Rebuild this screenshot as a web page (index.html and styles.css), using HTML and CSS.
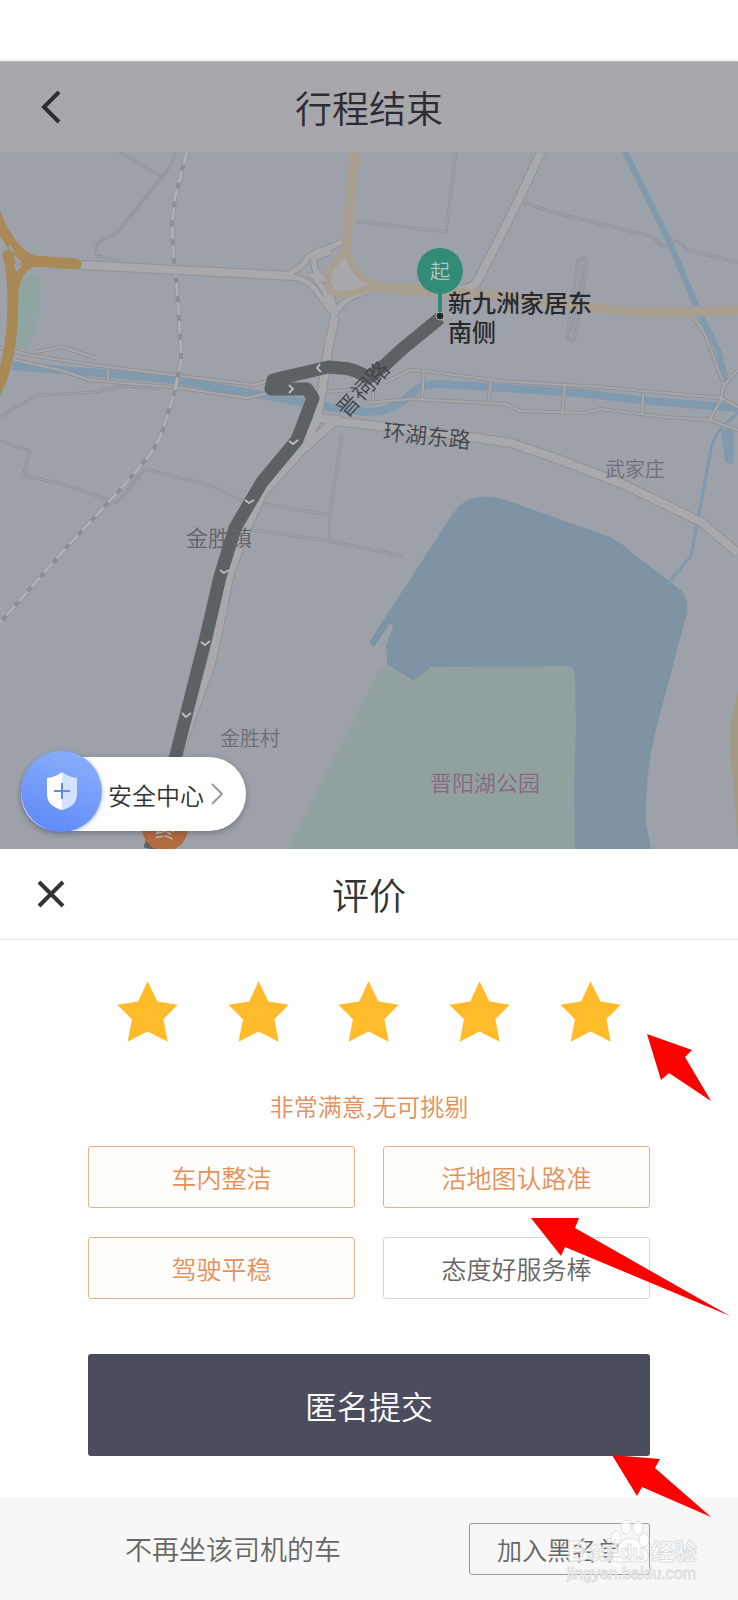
FILE: index.html
```html
<!DOCTYPE html>
<html lang="zh-CN">
<head>
<meta charset="utf-8">
<meta name="viewport" content="width=device-width, initial-scale=1">
<title>行程结束</title>
<link rel="stylesheet" href="styles.css">
</head>
<body>
<div class="page">
  <header class="topbar">
    <button class="icon-button" type="button" aria-label="返回">
      <svg class="icon-back" viewBox="0 0 22 34" aria-hidden="true"><path d="M19 2 4 17 19 32"/></svg>
    </button>
    <h1 class="title">行程结束</h1>
  </header>

  <section class="map" aria-label="行程地图">
    <svg class="map-canvas" viewBox="0 152 738 697" preserveAspectRatio="xMidYMid slice">
      <defs>
        <g id="lanes">
          <path d="M118 152 162 176M175 152Q172 166 163 176L120 229Q116 235 104 239 96 243 96 250L97 256 121 261"/>
          <path d="M456 152 446 232 356 221"/>
          <path d="M523 202 548 211 650 236Q655 238 662 246 668 246 672 241 680 240 687 250L738 262"/>
          <path d="M578 261Q585 254 587 262L575 338Q570 344 567 336ZM583 264 571 334"/>
          <path d="M0 417 35 396 95 392 125 386 160 389"/>
          <path d="M0 441 30 451 23 476 60 483 117 503 145 469 210 485 240 500 330 515 329 541M245 529 329 541 402 556M342 434 330 515"/>
        </g>
        <g id="banks">
          <path d="M0 348 35 356 100 366 180 376 255 385 276 378M15 360 60 370 90 380 180 388 247 398 268 393M35 352 62 347 96 358M108 370V380"/>
          <path d="M384 383 410 370 425 371 500 381 600 387 721 398 738 407M366 403 410 399 505 404 520 411 585 413 600 409 665 417 710 420 738 430"/>
          <path d="M424 371 422 399M491 382 488 403M565 385 562 412M643 393 642 414M722 398 709 421M373 388V403M693 318Q705 330 709 345L724 385 721 398M724 385 738 370M325 392 350 390"/>
        </g>
        <g id="roads">
          <path d="M81 265 177 270 294 276"/>
          <path d="M335 316 328 350 322 390 317 420 300 452 263 493 247 527 230 573 217 637 210 667 193 713 178 757"/>
          <path d="M541 152 520 197 495 247 478 280Q473 288 465 289L440 290"/>
          <path d="M296 455 335 421 370 425 478 438 511 443 555 458 625 485 701 522 738 553M315 418 340 420"/>
        </g>
        <g id="ramps">
          <path d="M290 273Q302 268 307 259 314 251 326 249L342 242"/>
          <path d="M326 280Q312 272 314 258L330 252"/>
          <path d="M292 277Q306 279 314 288L335 316M312 274 324 290 334 312M330 294 336 312Q346 296 368 291M310 275 330 281"/>
        </g>
      </defs>

      <rect class="land" x="0" y="152" width="738" height="697"/>
      <path class="green" d="M18 290Q34 266 41 280L38 320 28 347 12 350Z"/>
      <path class="water" d="M468 500Q477 496 488 497 498 497 511 502L610 537Q622 543 635 555L678 588Q686 594 687 603 688 612 684 624L655 733Q645 775 646 823L651 849H560V680H412L387 664 386 645 393 627Q392 622 389 625L374 647 369 642 450 518Q458 505 468 500Z"/>
      <path class="park" d="M387 664 412 682 431 667 570 666Q575 668 575 677L576 727 574 787 575 849H288L370 688Q376 674 387 664Z"/>
      <path class="amber-pale" d="M738 690 731 722Q729 745 732 770L738 843Z"/>

      <path class="river" d="M12 366 100 373 175 380 250 393 330 407 366 412Q388 412 402 402L418 388Q424 385 440 384L490 387 580 393 650 401 738 408"/>
      <path class="stream" d="M625 152 669 241 698 310 718 350 727 385"/>
      <path class="creek" d="M738 413 722 427Q713 438 711 450L698 518 691 556 669 582"/>
      <path class="pond" d="M721 430 734 426 733 465 725 462Z"/>

      <use href="#lanes" class="lane-edge"/>
      <use href="#lanes" class="lane-fill"/>
      <use href="#banks" class="bank-edge"/>
      <use href="#banks" class="bank-fill"/>
      <path class="rail-edge" d="M187 152 175 197 172 223 173 250 177 290 181 350V362L175 390 163 430Q156 448 143 463L117 493 67 547 20 600 0 623"/>
      <path class="rail-fill" d="M187 152 175 197 172 223 173 250 177 290 181 350V362L175 390 163 430Q156 448 143 463L117 493 67 547 20 600 0 623"/>
      <use href="#ramps" class="ramp-edge"/>
      <use href="#roads" class="road-edge"/>
      <use href="#ramps" class="ramp-fill"/>
      <use href="#roads" class="road-fill"/>
      <path class="junction" d="M347 252 363 276 374 286 343 296 329 290 328 272Z"/>
      <path class="tan-road" d="M355 152 348 220 347 248M598 308Q640 315 738 310M370 286 401 289 500 296 598 308"/>
      <path class="tan-ramp" d="M347 246Q344 255 336 262 327 270 328 282 330 297 348 294L376 286M347 246Q349 266 362 277L378 286"/>
      <path class="amber" d="M-4 215Q12 255 35 261L76 264M8 255Q15 280 12 325 9 368-5 393M32 262Q17 267 13 290"/>
      <path class="amber-gap" d="M9 244 16 252 10 251ZM14 264 23 265 16 272Z"/>

      <path class="route" d="M440 318 401 350 385 365 368 378Q355 368 340 368L328 367 273 380 271 389 307 389 313 398 297 440 262 482 235 528 220 577 207 633 176 755 150 849"/>
      <path class="route-arrows" d="M320 364 317 368 321 372M289 385 293 389 289 393M289 441 293 444 298 440M245 500 249 503 254 500M220 570 224 573 229 570M201 642 205 645 210 641M182 713 186 717 191 713"/>

      <circle class="start-pin" cx="440" cy="271" r="23"/>
      <path class="start-stem" d="M440 292V313"/>
      <circle class="start-dot" cx="440" cy="316" r="4"/>
      <text class="pin-text" x="440" y="279">起</text>
      <circle class="end-pin" cx="165" cy="828" r="23"/>
      <text class="pin-text" x="165" y="838">终</text>

      <text class="label road-name" transform="translate(363 389) rotate(-48)" y="8">晋祠路</text>
      <text class="label road-name" transform="translate(427 436) rotate(6)" y="8">环湖东路</text>
      <text class="label village" x="635" y="477">武家庄</text>
      <text class="label town" x="219" y="546">金胜镇</text>
      <text class="label village" x="250" y="746">金胜村</text>
      <text class="label park-name" x="485" y="791">晋阳湖公园</text>
      <text class="label place" x="448" y="312">新九洲家居东</text>
      <text class="label place" x="448" y="341">南侧</text>
    </svg>

    <button class="safety" type="button">
      <span class="safety-badge">
        <svg class="icon-shield" viewBox="0 0 32 38" aria-hidden="true">
          <path class="shield-left" d="M16 0Q10 5 1 6V22Q1 34 16 38Z"/>
          <path class="shield-right" d="M16 0Q22 5 31 6V22Q31 34 16 38Z"/>
          <path class="shield-plus" d="M16 11V27M8 19H24"/>
        </svg>
      </span>
      <span>安全中心</span>
      <svg class="icon-next" viewBox="0 0 14 24" aria-hidden="true"><path d="M2 2 12 12 2 22"/></svg>
    </button>
  </section>

  <main class="sheet">
    <div class="sheet-head">
      <button class="icon-button" type="button" aria-label="关闭">
        <svg class="icon-close" viewBox="0 0 28 28" aria-hidden="true"><path d="M2 2 26 26M26 2 2 26"/></svg>
      </button>
      <h2 class="title">评价</h2>
    </div>

    <form class="review">
      <div class="stars" role="radiogroup" aria-label="评分">
        <label class="star"><input type="radio" name="score" value="1" aria-label="1星"><svg viewBox="0 0 184 184" aria-hidden="true"><path d="M92 1 122 62 183 72 140 115 153 183 92 152 32 183 45 115 1 72 64 62Z"/></svg></label>
        <label class="star"><input type="radio" name="score" value="2" aria-label="2星"><svg viewBox="0 0 184 184" aria-hidden="true"><path d="M92 1 122 62 183 72 140 115 153 183 92 152 32 183 45 115 1 72 64 62Z"/></svg></label>
        <label class="star"><input type="radio" name="score" value="3" aria-label="3星"><svg viewBox="0 0 184 184" aria-hidden="true"><path d="M92 1 122 62 183 72 140 115 153 183 92 152 32 183 45 115 1 72 64 62Z"/></svg></label>
        <label class="star"><input type="radio" name="score" value="4" aria-label="4星"><svg viewBox="0 0 184 184" aria-hidden="true"><path d="M92 1 122 62 183 72 140 115 153 183 92 152 32 183 45 115 1 72 64 62Z"/></svg></label>
        <label class="star"><input type="radio" name="score" value="5" aria-label="5星" checked><svg viewBox="0 0 184 184" aria-hidden="true"><path d="M92 1 122 62 183 72 140 115 153 183 92 152 32 183 45 115 1 72 64 62Z"/></svg></label>
      </div>
      <p class="verdict">非常满意,无可挑剔</p>
      <div class="tags">
        <label class="tag"><input type="checkbox" name="tag" checked><span>车内整洁</span></label>
        <label class="tag"><input type="checkbox" name="tag" checked><span>活地图认路准</span></label>
        <label class="tag"><input type="checkbox" name="tag" checked><span>驾驶平稳</span></label>
        <label class="tag"><input type="checkbox" name="tag"><span>态度好服务棒</span></label>
      </div>
      <button class="submit" type="button">匿名提交</button>
    </form>

    <footer class="block-bar">
      <span>不再坐该司机的车</span>
      <button class="block-button" type="button">加入黑名单</button>
    </footer>

    <svg class="overlay" viewBox="0 849 738 751" aria-hidden="true">
      <g class="pointer">
        <path d="M647 1034 692 1050 685 1057 711 1101 669 1073 661 1080Z"/>
        <path d="M531 1218H579L575 1228 730 1316 565 1247 561 1256Z"/>
        <path d="M612 1455 660 1459 655 1468 711 1517 642 1487 637 1496Z"/>
      </g>
      <g class="watermark">
        <text class="mark-name" x="567" y="1561">Bai</text>
        <path d="M630 1538Q637 1538 642 1545L648 1553Q650 1563 640 1562 630 1560 620 1562 610 1562 613 1552L619 1545Q624 1538 630 1538Z"/>
        <ellipse cx="616" cy="1538" rx="5" ry="7"/>
        <ellipse cx="626" cy="1527" rx="5" ry="7"/>
        <ellipse cx="638" cy="1528" rx="5" ry="7"/>
        <ellipse cx="644" cy="1540" rx="5" ry="7"/>
        <text class="mark-du" x="620" y="1559">du</text>
        <text class="mark-cn" x="651" y="1560">经验</text>
        <text class="mark-url" x="567" y="1579">jingyan.baidu.com</text>
      </g>
    </svg>
  </main>
</div>
</body>
</html>
```

FILE: styles.css
```css
* {
  box-sizing: border-box;
}

body {
  margin: 0;
  background: #fff;
  color: #38383c;
  font-family: "Noto Sans CJK SC", sans-serif;
  font-size: 25px;
  font-weight: 350;
}

button {
  border: 0;
  padding: 0;
  background: none;
  color: inherit;
  font: inherit;
}

.page {
  padding-top: 61px;
}

.topbar,
.sheet-head {
  display: grid;
  grid-template-columns: 102px 1fr 102px;
  align-items: center;
  min-height: 91px;
}

.topbar {
  position: relative;
  border-top: 1px solid #bcbbbf;
  background: #a8a7ab;
  color: #2c2c34;
  box-shadow: 0 1px 4px rgba(70, 70, 80, 0.35);
}

.title {
  margin: 0;
  text-align: center;
  font-size: 37px;
  font-weight: 350;
  line-height: 52px;
}

.icon-button {
  display: grid;
  place-items: center;
  height: 60px;
}

.icon-back,
.icon-close,
.icon-next {
  fill: none;
  stroke: currentColor;
}

.icon-back {
  width: 22px;
  height: 34px;
  stroke-width: 4;
}

.icon-close {
  width: 28px;
  height: 28px;
  stroke-width: 4;
}

/* Map */
.map {
  position: relative;
}

.map-canvas {
  display: block;
  width: 100%;
  overflow: hidden;
}

.map-canvas path,
.map-canvas use {
  stroke-linejoin: round;
}

.land { fill: #9da1a9; }
.green { fill: #8fa5a1; }
.water { fill: #7e93a4; }
.park { fill: #91a19f; }
.amber-pale { fill: #a39a83; }
.pond { fill: #7f99af; }

.river,
.stream,
.creek {
  fill: none;
  stroke: #7f99ae;
}

.river { stroke-width: 8; }
.stream { stroke-width: 6; }
.creek { stroke-width: 3; }

.lane-edge { fill: none; stroke: #8f9399; stroke-width: 3; }
.lane-fill { fill: none; stroke: #a3a6ad; stroke-width: 1; }
.bank-edge { fill: none; stroke: #909194; stroke-width: 4; }
.bank-fill { fill: none; stroke: #a7a8ac; stroke-width: 2; }
.rail-edge { fill: none; stroke: #8a8f95; stroke-width: 4; }
.rail-fill { fill: none; stroke: #adb0b4; stroke-width: 3; stroke-dasharray: 13 6; }
.road-edge { fill: none; stroke: #929297; stroke-width: 10; }
.road-fill { fill: none; stroke: #a9a8ac; stroke-width: 8; }
.ramp-edge { fill: none; stroke: #929297; stroke-width: 7; }
.ramp-fill { fill: none; stroke: #a9a8ac; stroke-width: 5; }
.junction { fill: #a9a8ac; }
.tan-road { fill: none; stroke: #a89f90; stroke-width: 10; }
.tan-ramp { fill: none; stroke: #a89f90; stroke-width: 7; }
.amber { fill: none; stroke: #a98a57; stroke-width: 11; stroke-linecap: round; }
.amber-gap { fill: #9da1a9; }
.route { fill: none; stroke: #5c6164; stroke-width: 13; }
.route-arrows { fill: none; stroke: #b9bbbe; stroke-width: 2; }

.start-pin { fill: #328b76; }
.start-stem { stroke: #328b76; stroke-width: 4; }
.start-dot { fill: #222427; stroke: #b0b2b6; stroke-width: 1; }
.end-pin { fill: #b26a40; }

.pin-text {
  fill: #b6c4c3;
  font-size: 20px;
  text-anchor: middle;
}

.label {
  font-size: 20px;
  text-anchor: middle;
}

.road-name { fill: #43454c; font-size: 22px; }
.village { fill: #6c6f77; }
.town { fill: #62656b; font-size: 22px; }
.park-name { fill: #8a6685; font-size: 22px; }

.place {
  fill: #292a30;
  font-size: 24px;
  font-weight: 500;
  text-anchor: start;
}

.safety {
  position: absolute;
  bottom: 18px;
  left: 21px;
  display: flex;
  align-items: center;
  gap: 6px;
  height: 74px;
  padding-right: 22px;
  border-radius: 37px;
  background: #fff;
  color: #333;
  font-size: 24px;
  box-shadow: 0 2px 6px rgba(40, 40, 50, 0.35);
}

.safety-badge {
  display: grid;
  place-items: center;
  width: 81px;
  height: 81px;
  margin-bottom: 6px;
  border-radius: 50%;
  background: linear-gradient(200deg, #8fb2fb, #5b86f8);
  box-shadow: 0 1px 4px rgba(70, 100, 180, 0.45);
}

.icon-shield {
  width: 32px;
  height: 38px;
}

.shield-left { fill: #fff; }
.shield-right { fill: #d5e2fd; }
.shield-plus { stroke: #5e8bf6; stroke-width: 2; }

.icon-next {
  width: 14px;
  height: 24px;
  color: #999;
  stroke-width: 2;
}

/* Review sheet */
.sheet {
  position: relative;
  background: #fff;
}

.sheet-head {
  border-bottom: 1px solid #e4e4e6;
  color: #333;
}

.review {
  padding: 41px 88px;
}

.stars {
  display: grid;
  grid-template-columns: repeat(5, 1fr);
  margin: 0 4px;
}

.star {
  display: grid;
  place-items: center;
}

.star input,
.tag input {
  position: absolute;
  opacity: 0;
}

.star svg {
  width: 61px;
  height: 61px;
  fill: #ffbb2a;
}

.verdict {
  margin: 46px 0 22px;
  color: #e58f5a;
  text-align: center;
  font-size: 24px;
  line-height: 36px;
}

.tags {
  display: grid;
  grid-template-columns: 1fr 1fr;
  gap: 29px 28px;
}

.tag {
  display: grid;
  place-items: center;
  min-height: 62px;
  border: 1px solid #d8d8da;
  border-radius: 3px;
  color: #666;
}

.tag:has(input:checked) {
  border-color: #dfb48e;
  background: #fffdfa;
  color: #e58f5a;
}

.submit {
  width: 100%;
  min-height: 102px;
  margin-top: 55px;
  border-radius: 3px;
  background: #4b4c5e;
  color: #fff;
  font-size: 32px;
}

.block-bar {
  display: flex;
  align-items: center;
  justify-content: space-between;
  min-height: 103px;
  padding: 0 88px 0 125px;
  background: #f7f7f7;
  color: #666;
  font-size: 27px;
}

.block-button {
  min-height: 52px;
  padding: 0 27px;
  border: 1px solid #999;
  border-radius: 3px;
  font-size: 25px;
}

.overlay {
  position: absolute;
  top: 0;
  left: 0;
  width: 100%;
  pointer-events: none;
}

.pointer { fill: #fe0000; }

.watermark {
  fill: #fff;
  fill-opacity: 0.8;
  stroke: #dedede;
  stroke-width: 1;
  font-family: "Liberation Sans", "Noto Sans CJK SC", sans-serif;
  font-weight: 700;
}

.mark-name { font-size: 30px; }
.mark-du { font-size: 20px; }
.mark-cn { font-size: 23px; }
.mark-url { font-size: 16px; font-weight: 400; }
```
